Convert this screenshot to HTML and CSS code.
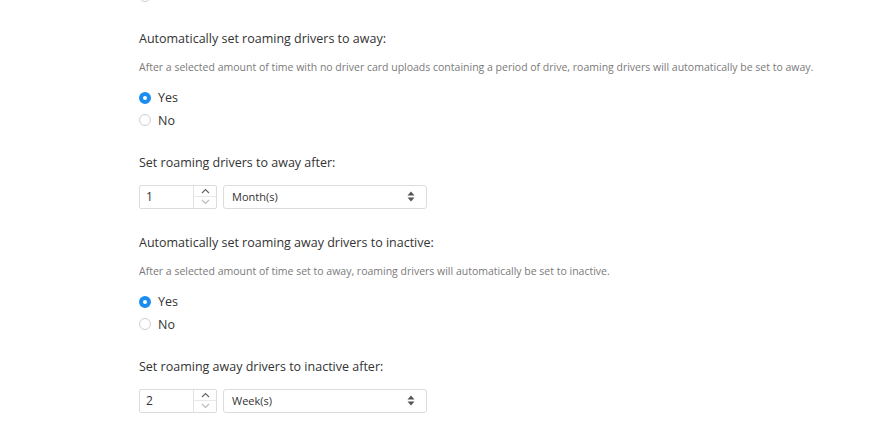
FILE: index.html
```
<!DOCTYPE html>
<html lang="en">

<head>
    <meta charset="UTF-8">
    <meta name="viewport" content="width=device-width, initial-scale=1.0">
    <title>Roaming drivers</title>
    <link rel="stylesheet" href="styles.css">
</head>

<body>
    <div class="cont">
        <div class="radios radios-top">
            <span class="radio"><span class="dot"></span></span>
        </div>

        <div class="section">
            <p class="title">Automatically set roaming drivers to away:</p>
            <p class="desc">After a selected amount of time with no driver card uploads containing a period of drive, roaming drivers will automatically be set to away.</p>
            <div class="radios">
                <label class="radio"><span class="dot on"></span>Yes</label>
                <label class="radio"><span class="dot"></span>No</label>
            </div>
        </div>

        <div class="section">
            <p class="title">Set roaming drivers to away after:</p>
            <div class="row">
                <div class="num">
                    <span class="num-val">1</span>
                    <span class="spin">
                        <span class="spin-btn"><svg width="9" height="6" viewBox="0 0 9 6"><path d="M1 5 L4.5 1.5 L8 5" fill="none" stroke="#666" stroke-width="1.2"/></svg></span>
                        <span class="spin-btn"><svg width="9" height="6" viewBox="0 0 9 6"><path d="M1 1 L4.5 4.5 L8 1" fill="none" stroke="#bbb" stroke-width="1.2"/></svg></span>
                    </span>
                </div>
                <div class="sel">
                    <span>Month(s)</span>
                    <svg width="8" height="11" viewBox="0 0 8 11"><path d="M4 0.5 L7.5 4.5 H0.5 Z M4 10.5 L7.5 6.5 H0.5 Z" fill="#555"/></svg>
                </div>
            </div>
        </div>

        <div class="section">
            <p class="title">Automatically set roaming away drivers to inactive:</p>
            <p class="desc">After a selected amount of time set to away, roaming drivers will automatically be set to inactive.</p>
            <div class="radios">
                <label class="radio"><span class="dot on"></span>Yes</label>
                <label class="radio"><span class="dot"></span>No</label>
            </div>
        </div>

        <div class="section">
            <p class="title">Set roaming away drivers to inactive after:</p>
            <div class="row">
                <div class="num">
                    <span class="num-val">2</span>
                    <span class="spin">
                        <span class="spin-btn"><svg width="9" height="6" viewBox="0 0 9 6"><path d="M1 5 L4.5 1.5 L8 5" fill="none" stroke="#666" stroke-width="1.2"/></svg></span>
                        <span class="spin-btn"><svg width="9" height="6" viewBox="0 0 9 6"><path d="M1 1 L4.5 4.5 L8 1" fill="none" stroke="#bbb" stroke-width="1.2"/></svg></span>
                    </span>
                </div>
                <div class="sel">
                    <span>Week(s)</span>
                    <svg width="8" height="11" viewBox="0 0 8 11"><path d="M4 0.5 L7.5 4.5 H0.5 Z M4 10.5 L7.5 6.5 H0.5 Z" fill="#555"/></svg>
                </div>
            </div>
        </div>
    </div>
</body>

</html>
```

FILE: styles.css
```
body {
    margin: 0;
    background: #fff;
    font-family: 'Open Sans', 'Noto Sans', sans-serif;
    color: #333;
}

.cont {
    display: flex;
    flex-direction: column;
    padding-left: 139px;
    margin-top: -15px;
}

.section {
    display: flex;
    flex-direction: column;
}

.title {
    margin: 0;
    font-size: 12.5px;
    line-height: 18px;
    color: #333;
}

.desc {
    margin: 11px 0 0 0;
    font-size: 10.5px;
    line-height: 16px;
    color: #7a7a7a;
}

.radios {
    display: flex;
    flex-direction: column;
    margin-top: 12px;
    margin-bottom: 22px;
}

.radios-top {
    margin-top: 0;
    margin-bottom: 22px;
}

.radio {
    display: flex;
    align-items: center;
    gap: 7px;
    height: 22.5px;
    font-size: 12.5px;
    color: #333;
}

.dot {
    box-sizing: border-box;
    width: 12px;
    height: 12px;
    border-radius: 50%;
    border: 1px solid #cfcfcf;
    background: #fff;
}

.dot.on {
    border: 4px solid #1b8cf0;
    background: #fff;
}

.row {
    display: flex;
    gap: 6px;
    margin-top: 13px;
    margin-bottom: 25px;
}

.num {
    box-sizing: border-box;
    display: flex;
    width: 78px;
    height: 24px;
    border: 1px solid #dcdcdc;
    border-radius: 2px;
}

.num-val {
    flex: 1;
    padding-left: 6px;
    font-size: 12px;
    line-height: 22px;
    color: #333;
}

.spin {
    display: flex;
    flex-direction: column;
    width: 22px;
    border-left: 1px solid #e2e2e2;
}

.spin-btn {
    flex: 1;
    display: flex;
    align-items: center;
    justify-content: center;
}

.spin-btn + .spin-btn {
    border-top: 1px solid #e8e8e8;
}

.sel {
    box-sizing: border-box;
    display: flex;
    align-items: center;
    justify-content: space-between;
    width: 204px;
    height: 24px;
    padding: 0 11px 0 8px;
    border: 1px solid #dcdcdc;
    border-radius: 3px;
    font-size: 11px;
    color: #333;
}
```
